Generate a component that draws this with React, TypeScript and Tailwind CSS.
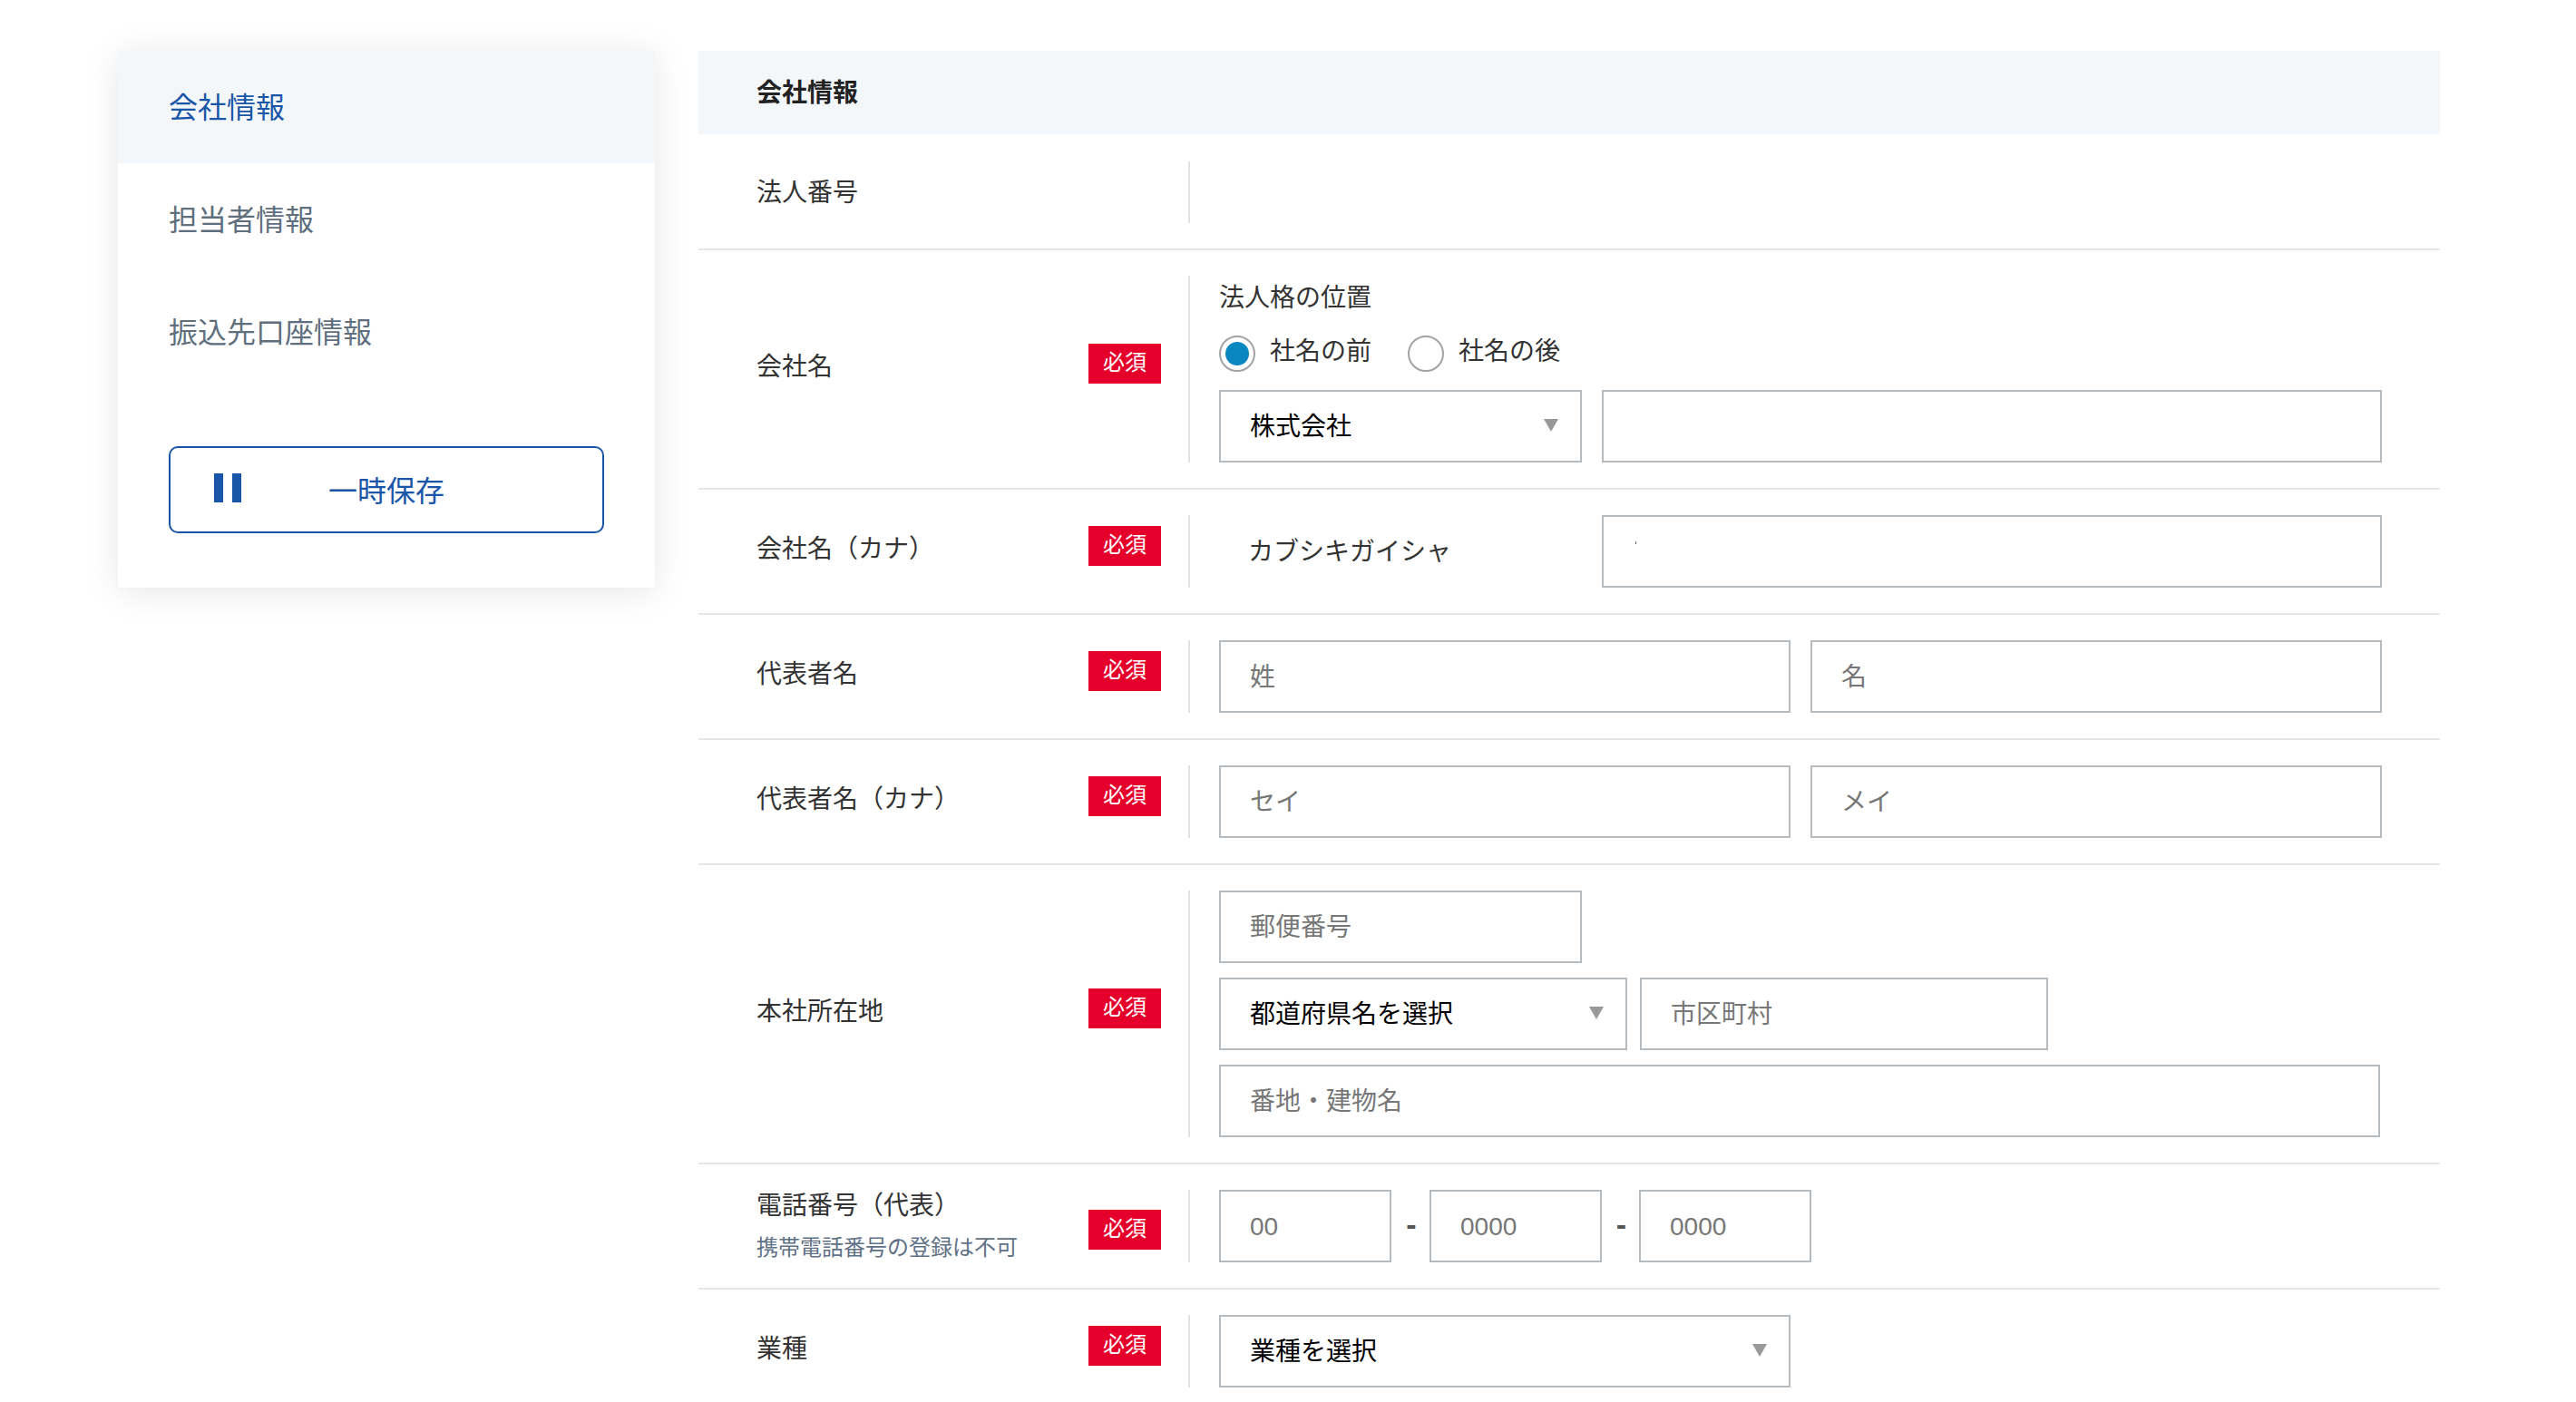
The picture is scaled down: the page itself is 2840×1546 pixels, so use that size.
import type { ReactNode } from 'react'

const font = '[font-family:"Liberation_Sans","Noto_Sans_CJK_JP",sans-serif]'

function Badge() {
  return (
    <span className="flex h-[44px] w-[80px] shrink-0 items-center justify-center bg-[#e4002b] pb-[2px] text-[24px] text-white">
      必須
    </span>
  )
}

function TextInput({ placeholder, className }: { placeholder?: string; className: string }) {
  return (
    <input
      placeholder={placeholder}
      className={
        'h-[80px] shrink-0 rounded-none border-2 border-[#b5babe] bg-white pt-[2px] pl-[32px] text-[28px] text-black outline-none placeholder:text-[#777777] ' +
        className
      }
    />
  )
}

function SelectBox({ value, className }: { value: string; className: string }) {
  return (
    <div className={'relative h-[80px] shrink-0 ' + className}>
      <select
        defaultValue={value}
        className="h-full w-full appearance-none rounded-none border-2 border-[#b5babe] bg-white pt-[2px] pl-[32px] text-[28px] text-black outline-none"
      >
        <option>{value}</option>
      </select>
      {/* ▼ */}
      <svg viewBox="0 0 16 14" className="pointer-events-none absolute top-[32px] right-[26px] h-[14px] w-[16px]">
        <path d="M0 0h16L8 14z" fill="#999999" />
      </svg>
    </div>
  )
}

function Row({
  label,
  required = true,
  children,
}: {
  label: ReactNode
  required?: boolean
  children?: ReactNode
}) {
  return (
    <div className="flex border-b-2 border-[#e3e7ea] py-[28px]">
      <div className="flex w-[540px] shrink-0 items-center justify-between pr-[30px] pb-3 pl-[64px]">
        <div className="pt-[7px]">{label}</div>
        {required && <Badge />}
      </div>
      <div className="w-[1380px] border-l-2 border-[#e0e3e6] pl-[32px]">{children}</div>
    </div>
  )
}

function Radio({ checked, label }: { checked?: boolean; label: string }) {
  return (
    <label className="flex h-10 items-center gap-4">
      <span className="flex h-10 w-10 items-center justify-center rounded-full border-2 border-[#a3a3a3] bg-white">
        {checked && <span className="h-[26px] w-[26px] rounded-full bg-[#0a86c1]" />}
      </span>
      <span className="pb-[5px]">{label}</span>
    </label>
  )
}

export default function App() {
  return (
    <div className={'h-[1546px] overflow-hidden bg-white pt-[56px] pl-[130px] text-[28px] text-[#333333] ' + font}>
      <div className="flex items-start gap-[48px]">
        {/* サイドメニュー */}
        <aside className="w-[592px] shrink-0 bg-white pb-[60px] shadow-[0_4px_36px_rgba(0,0,0,0.1)]">
          <nav className="text-[32px] text-[#5f6f7e]">
            <div className="flex h-[124px] items-center bg-[#f4f7fa] pt-[2px] pl-[56px] text-[#1a56a8]">会社情報</div>
            <div className="flex h-[124px] items-center pt-[2px] pl-[56px]">担当者情報</div>
            <div className="flex h-[124px] items-center pt-[2px] pl-[56px]">振込先口座情報</div>
          </nav>
          <button className="relative mx-[56px] mt-[64px] flex h-[96px] w-[480px] items-center justify-center rounded-[10px] border-2 border-[#1a56a8] pt-1 text-[32px] text-[#1a56a8]">
            <span className="absolute top-[28px] left-[48px] flex gap-[10px]">
              <span className="h-[32px] w-[10px] bg-[#1a56a8]" />
              <span className="h-[32px] w-[10px] bg-[#1a56a8]" />
            </span>
            一時保存
          </button>
        </aside>

        {/* フォーム */}
        <main className="w-[1920px] shrink-0">
          <h2 className="flex h-[92px] items-center bg-[#f4f7fa] pt-[2px] pl-[64px] text-[28px] font-bold text-[#222222]">
            会社情報
          </h2>

          <div className="flex border-b-2 border-[#e3e7ea] pt-[30px] pb-[28px]">
            <div className="flex w-[540px] shrink-0 items-center pt-[2px] pl-[64px]">法人番号</div>
            <div className="h-[68px] border-l-2 border-[#e0e3e6]" />
          </div>

          <Row label="会社名">
            <div className="flex h-[46px] items-center pt-1">法人格の位置</div>
            <div className="mt-5 flex gap-[40px]">
              <Radio checked label="社名の前" />
              <Radio label="社名の後" />
            </div>
            <div className="mt-5 flex gap-[22px]">
              <SelectBox value="株式会社" className="w-[400px]" />
              <TextInput className="w-[860px]" />
            </div>
          </Row>

          <Row label="会社名（カナ）">
            <div className="flex gap-[22px]">
              <div className="flex h-[80px] w-[400px] shrink-0 items-center pt-[2px] pl-[32px]">カブシキガイシャ</div>
              <div className="relative">
                <TextInput className="w-[860px]" />
                <span className="absolute top-[29px] left-[37px] h-[3px] w-px bg-[#666666]" />
              </div>
            </div>
          </Row>

          <Row label="代表者名">
            <div className="flex gap-[22px]">
              <TextInput placeholder="姓" className="w-[630px]" />
              <TextInput placeholder="名" className="w-[630px]" />
            </div>
          </Row>

          <Row label="代表者名（カナ）">
            <div className="flex gap-[22px]">
              <TextInput placeholder="セイ" className="w-[630px]" />
              <TextInput placeholder="メイ" className="w-[630px]" />
            </div>
          </Row>

          <Row label="本社所在地">
            <div className="flex flex-col gap-4">
              <TextInput placeholder="郵便番号" className="w-[400px]" />
              <div className="flex gap-[14px]">
                <SelectBox value="都道府県名を選択" className="w-[450px]" />
                <TextInput placeholder="市区町村" className="w-[450px]" />
              </div>
              <TextInput placeholder="番地・建物名" className="w-[1280px]" />
            </div>
          </Row>

          <div className="flex border-b-2 border-[#e3e7ea] py-[28px]">
            <div className="flex h-[80px] w-[540px] shrink-0 items-center justify-between pr-[30px] pl-[64px]">
              <div className="pt-[2px]">
                <p className="leading-[46px]">電話番号（代表）</p>
                <p className="text-[24px] leading-[46px] text-[#5f7186]">携帯電話番号の登録は不可</p>
              </div>
              <div className="mt-2">
                <Badge />
              </div>
            </div>
            <div className="flex items-center border-l-2 border-[#e0e3e6] pl-[32px]">
              <TextInput placeholder="00" className="w-[190px]" />
              <span className="w-[42px] pb-1 pl-[2px] text-center text-[34px] font-bold text-[#555555]">-</span>
              <TextInput placeholder="0000" className="w-[190px]" />
              <span className="w-[41px] pb-1 pl-[2px] text-center text-[34px] font-bold text-[#555555]">-</span>
              <TextInput placeholder="0000" className="w-[190px]" />
            </div>
          </div>

          <Row label="業種">
            <SelectBox value="業種を選択" className="w-[630px]" />
          </Row>
        </main>
      </div>
    </div>
  )
}
